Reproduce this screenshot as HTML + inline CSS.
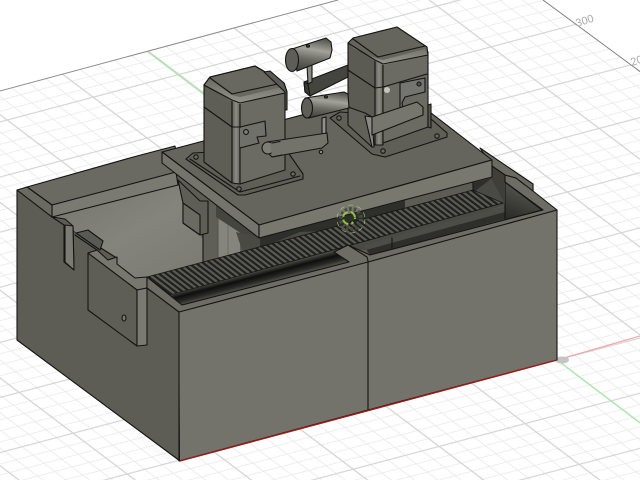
<!DOCTYPE html>
<html lang="en">
<head>
<meta charset="utf-8">
<title>CAD model</title>
<style>
html,body{margin:0;padding:0;background:#fff;width:640px;height:480px;overflow:hidden}
svg{display:block;filter:blur(.3px)}
text{font-family:"Liberation Sans",sans-serif;fill:#a8a8a8;font-size:11px}
.e{stroke:#141412;stroke-width:1.1;stroke-linejoin:round;stroke-linecap:round}
.n{fill:none}
</style>
</head>
<body>
<svg width="640" height="480" viewBox="0 0 640 480" xmlns="http://www.w3.org/2000/svg">
<defs>
<pattern id="g" patternUnits="userSpaceOnUse" width="5" height="5" patternTransform="matrix(17.2 -4.56 10.8 8.16 557 360)">
<rect x="0" y="1" width="5" height=".08" fill="#ebebeb"/>
<rect x="0" y="2" width="5" height=".08" fill="#ebebeb"/>
<rect x="0" y="3" width="5" height=".08" fill="#ebebeb"/>
<rect x="0" y="4" width="5" height=".08" fill="#ebebeb"/>
<rect x="1" y="0" width=".065" height="5" fill="#ebebeb"/>
<rect x="2" y="0" width=".065" height="5" fill="#ebebeb"/>
<rect x="3" y="0" width=".065" height="5" fill="#ebebeb"/>
<rect x="4" y="0" width=".065" height="5" fill="#ebebeb"/>
<rect x="0" y="-.05" width="5" height=".11" fill="#d4d4d4"/>
<rect x="-.04" y="0" width=".09" height="5" fill="#d4d4d4"/>
<rect x="0" y="4.95" width="5" height=".05" fill="#d4d4d4"/>
<rect x="4.96" y="0" width=".04" height="5" fill="#d4d4d4"/>
</pattern>
<pattern id="t" patternUnits="userSpaceOnUse" width="1" height="1" patternTransform="matrix(5.4 -1.43 7.6 5.8 147 277)">
<rect width="1" height="1" fill="#5a5a54"/>
<rect x="0" width=".5" height="1" fill="#20201c"/>
</pattern>
<linearGradient id="int" x1="0" y1="0" x2="1" y2="1"><stop offset="0" stop-color="#74746d"/><stop offset=".5" stop-color="#84847d"/><stop offset="1" stop-color="#797972"/></linearGradient>
<linearGradient id="sl" gradientUnits="userSpaceOnUse" x1="170" y1="295" x2="173.300" y2="307.600"><stop offset="0" stop-color="#3a3a36"/><stop offset=".3" stop-color="#0e0e0e"/><stop offset=".7" stop-color="#2a2a28"/><stop offset="1" stop-color="#55554f"/></linearGradient>
<linearGradient id="dk" x1=".7" y1="0" x2=".3" y2="1"><stop offset="0" stop-color="#5e5e57"/><stop offset="1" stop-color="#2c2c28"/></linearGradient>
<linearGradient id="cyl" x1=".6" y1="0" x2=".4" y2="1"><stop offset="0" stop-color="#55554f"/><stop offset=".35" stop-color="#a2a29a"/><stop offset=".65" stop-color="#6b6b64"/><stop offset="1" stop-color="#43433e"/></linearGradient>
<linearGradient id="bnd" x1=".5" y1="0" x2=".5" y2="1"><stop offset="0" stop-color="#6a6a63"/><stop offset="1" stop-color="#96958d"/></linearGradient>
<linearGradient id="fil" x1="0" y1="0" x2="1" y2="0"><stop offset="0" stop-color="#5c5c56"/><stop offset=".5" stop-color="#8c8c84"/><stop offset="1" stop-color="#62625b"/></linearGradient>
<clipPath id="gc"><polygon points="488,-41 900,265 900,800 -200,800 -200,145"/></clipPath>
<filter id="b4"><feGaussianBlur stdDeviation="4"/></filter>
</defs>

<rect width="640" height="480" fill="#fff"/>
<rect width="640" height="480" fill="url(#g)" clip-path="url(#gc)"/>
<line x1="-2" y1="91.500" x2="338" y2="0" stroke="#8d8d8d" stroke-width="1"/>
<line x1="543" y1="0" x2="642" y2="73" stroke="#7e7e7e" stroke-width="1"/>
<text transform="translate(577,27) rotate(-18)">300</text>
<text transform="translate(632,66) rotate(-18)">200</text>
<line x1="148" y1="52" x2="206" y2="96" stroke="#a8e8a8" stroke-width="1.2"/>
<line x1="557" y1="360" x2="640" y2="423" stroke="#a8e8a8" stroke-width="1.2"/>
<line x1="557" y1="360" x2="640" y2="336" stroke="#f4a6a6" stroke-width="1.2"/>
<ellipse cx="562" cy="360" rx="7" ry="3.500" fill="#c4c4c4"/>
<polygon points="92,402 170,458 176,464 130,430" fill="#bdbdbd" filter="url(#b4)" opacity=".7"/>

<!-- silhouette underlay -->
<polygon points="17,190 27,187 162,152 259,130 400,89 492,160 557,210 557,360 180,461 17,340" fill="#5d5d56"/>

<!-- left outer face -->
<polygon class="e" points="17,190 17,340 180,461 180,312 147,288 147,277 75,232 65,222 52,217" fill="#5d5d56"/>
<!-- right faces -->
<polygon fill="#73736c" points="179,312 368,261 368,410 180,461"/>
<polygon fill="#73736c" points="368,261 557,210 557,360 368,410"/>
<polyline class="e n" points="179,312 179,461 368,410 557,360 557,210"/>
<line class="e" x1="368" y1="261" x2="368" y2="410"/>
<line x1="180" y1="461" x2="557" y2="360" stroke="#a01a1a" stroke-width="1.4"/>

<!-- interior left -->
<polygon points="52,217 178,184 205,245 215,265 147,278 134,278 110,260 118,258 96,244 75,232 66,222" fill="url(#int)"/>
<!-- shelf -->
<polygon class="e" points="27,187 137,156 175,146 180,172 52,205" fill="#6a6a62"/>
<polygon class="e" points="52,205 176,172 178,185 52,217" fill="#7a7a72"/>
<polygon class="e" points="17,190 27,187 52,205 52,217" fill="#6a6a62"/>
<!-- notch strip -->
<polygon class="e" points="52,217 65,219 73,226 74,270 64,262 64,225" fill="#5d5d56"/>
<polygon class="e" points="65,225 73,226 74,270 65,262" fill="#7b7b73"/>
<!-- screws behind rim -->
<polygon class="e" points="76,233 88,230 103,241 100,250" fill="#5a5a54"/>
<!-- rim left -->
<polygon class="e" points="75,235 97,250 88,253 88,254 137,290 147,288 147,277 135,278 117,264 117,257 108,260 97,250" fill="#77776f"/>
<polygon class="e" points="88,253 137,290 137,346 88,310" fill="#5e5e57"/>
<polygon class="e" points="137,290 147,288 147,345 137,346" fill="#7a7a72"/>
<ellipse class="e" cx="124" cy="318" rx="2" ry="3" fill="#77776f"/>

<!-- columns under plate -->
<rect x="203" y="205" width="15" height="62" fill="#5f5f58"/>
<polygon points="218,205 240,222 240,258 218,264" fill="#85857d"/>
<line class="e" x1="203" y1="205" x2="203" y2="262"/>
<line x1="218" y1="215" x2="218" y2="262" stroke="#55554f"/>
<line x1="228" y1="222" x2="228" y2="256" stroke="#6d6d66"/>
<polygon class="e" points="178,180 200,201 208,201 208,233 200,235 183,223 183,203" fill="#5e5e57"/>
<polygon class="e" points="183,203 200,215 200,235 183,223" fill="#6a6a63"/>
<polygon fill="#45453f" points="216,205 262,238 260,250 239,232 216,217"/>

<!-- dark under plate region -->
<polygon points="236,232 262,238 492,175 505,182 505,205 370,250 346,250 250,274" fill="#4a4a44"/>
<polygon points="260,238 260,248 300,232 345,230 400,215 470,195 492,178" fill="#2e2e2a"/>
<polygon points="405,198 473,180 473,192 405,212" fill="#5d5d56"/>
<line class="e" x1="473" y1="178" x2="473" y2="192"/>
<!-- rack -->
<polygon points="147,277 473,190 503,203 170,295" fill="url(#t)" stroke="#141412" stroke-width=".8"/>
<!-- slots -->
<polygon points="170,295 347,248 352,262 182,305" fill="url(#sl)"/>
<polygon points="363,245 505,207 505,219 370,255" fill="#2e2e2b"/>
<polygon points="363,245 505,206 505,212 366,250" fill="#4d4d47"/>
<line class="e" x1="392" y1="238" x2="392" y2="248"/>
<!-- right corner dark -->
<polygon class="e" points="505,182 542,210 505,220" fill="url(#dk)"/>
<polygon points="492,160 505,175 516,177 533,190 505,182 505,204 492,180" fill="#3f3f3a"/>
<!-- rim top -->
<polygon class="e" points="147,288 147,277 182,305 349,262 334,252 348,245 370,255 543,210 505,182 505,175 516,178 525,185 533,184 533,191 557,210 368,262 179,312" fill="#6d6d66"/>
<polygon class="e" points="480,148 533,184 533,191 516,178 505,175 492,166" fill="#6a6a63"/>
<polyline class="e n" points="348,245 367,257 368,261"/>

<!-- plate -->
<polygon class="e" points="162,152 400,89 492,160 259,225" fill="#65655e"/>
<polygon class="e" points="162,152 259,225 259,238 162,163" fill="#74746d"/>
<polygon class="e" points="259,225 492,160 492,177 259,238" fill="#78786f"/>

<!-- gear -->
<g fill="none">
<circle cx="351" cy="219" r="10" stroke="#4a4a45" stroke-width="4" stroke-dasharray="2.500 2"/>
<circle cx="349" cy="218" r="6" stroke="#8fc63d" stroke-width="2" stroke-dasharray="7 3"/>
<circle cx="351" cy="219" r="14" stroke="#9fce7a" stroke-width=".6" stroke-dasharray="5 4"/>
</g>
<circle cx="355" cy="221" r="2" fill="#222"/>

<!-- base plate left -->
<path class="e" d="M186,159 L193,153 L285,148 L303,174 L303,179 L245,195 L238,195 Z" fill="#5f5f58"/>
<path class="e n" d="M190,159 L240,192 L300,176"/>
<circle class="e" cx="196" cy="157" r="2.200" fill="#6a6a62"/>
<circle class="e" cx="293" cy="174" r="2.200" fill="#6a6a62"/>
<circle class="e" cx="239" cy="189" r="2.200" fill="#6a6a62"/>

<!-- left block -->
<polygon class="e" points="204,85 204,162 232,183 232,100" fill="#5e5e57"/>
<polygon class="e" points="232,100 240,103 240,184 232,183" fill="url(#fil)"/>
<polygon class="e" points="240,103 285,92 285,170 240,184" fill="#6b6b63"/>
<polygon class="e" points="204,85 210,77 255,66 284,83 287,92 240,103 232,100" fill="#686860"/>
<polygon points="210,78 232,95 240,97 282,87 287,92 240,104 232,101 204,85" fill="url(#bnd)"/>
<polyline class="e n" points="204,85 210,77 255,66 284,83 287,92 285,93 240,103 232,100 204,85"/>
<polyline class="e n" points="210,78 232,94 282,83"/>
<polyline class="e n" points="204,107 232,127 240,127"/>
<polygon points="240,128 264,122 265,135 256,137 258,143 240,147" fill="#70706a"/>
<polyline class="e n" points="240,127 265,121 266,136 257,137 259,143 240,148"/>
<circle class="e" cx="246" cy="132" r="2.400" fill="#7f7f78"/>
<polygon class="e" points="264,72 270,71 284,83 287,92 287,110 285,110 285,92" fill="#5a5a54"/>

<!-- right base plate -->
<path class="e" d="M330,118 L340,112 L430,118 L447,133 L447,137 L385,157 L372,154 Z" fill="#5f5f58"/>
<circle class="e" cx="339" cy="118" r="2.200" fill="#6a6a62"/>
<circle class="e" cx="383" cy="151" r="2.200" fill="#6a6a62"/>
<circle class="e" cx="437" cy="136" r="2.200" fill="#6a6a62"/>

<!-- rear cylinder assembly -->
<polygon class="e" points="304,82 348,65 348,77 310,96 305,92" fill="#45453f"/>
<polygon class="e" points="304,82 308,84 310,96 305,92" fill="#3a3a35"/>
<polygon class="e" points="307,65 312,64 312,82 308,84" fill="#8b8b83"/>
<polygon class="e" points="292,49 326,38 331,42 332,50 330,58 297,71" fill="url(#cyl)"/>
<ellipse class="e" cx="292" cy="60" rx="6.500" ry="11.500" fill="#5e5e57"/>
<ellipse class="e" cx="308" cy="46" rx="1.500" ry="1.200" fill="#55554f"/>

<!-- right block -->
<polygon class="e" points="348,43 348,105 375,145 375,60" fill="#5b5b54"/>
<polygon class="e" points="375,60 383,64 383,145 375,145" fill="url(#fil)"/>
<polygon class="e" points="383,64 428,52 428,127 383,143" fill="#6b6b63"/>
<polygon points="353,38 397,27 427,47 428,55 383,65 375,60 348,43" fill="#65655e"/>
<polygon points="353,48 375,58 383,60 425,49 428,55 383,65 375,61 348,43" fill="url(#bnd)"/>
<polyline class="e n" points="348,43 353,38 397,27 427,47 428,55 383,64 375,60 348,43"/>
<polyline class="e n" points="353,39 378,57 425,46"/>
<polyline class="e n" points="348,70 375,88 383,87 427,74"/>
<polygon class="e" points="400,83 425,78 425,92 405,97 402,103 403,108 400,110" fill="#747470"/>
<circle class="e" cx="419" cy="84" r="2" fill="#55554f"/>
<circle cx="387" cy="90" r="3" fill="#c4c4bc"/>
<polygon class="e" points="428,105 431,104 431,128 428,127" fill="#5a5a54"/>

<!-- right lever -->
<polygon class="e" points="348,107 365,113 372,117 372,147 348,125" fill="#61615a"/>
<polygon class="e" points="365,116 372,117 374,147 372,147" fill="#8a8a82"/>
<polygon class="e" points="372,117 417,102 423,107 423,115 372,135" fill="#76766e"/>

<!-- front cylinder -->
<polygon class="e" points="322,118 326,117 326,133 322,135" fill="#92928a"/>
<polygon class="e" points="305,98 344,92 348,94 349,108 309,118" fill="url(#cyl)"/>
<ellipse class="e" cx="307" cy="108" rx="5.500" ry="10" fill="#5e5e57"/>
<ellipse class="e" cx="326" cy="97" rx="1.500" ry="1.100" fill="#55554f"/>

<!-- left handle -->
<polygon class="e" points="267,142 327,133 328,143 322,148 272,157 265,150" fill="#73736b"/>
<circle class="e" cx="268" cy="148" r="6" fill="#7e7e76"/>
<polygon points="270,143 280,142 282,153 272,156" fill="#73736b"/>
<line class="e" x1="272" y1="143" x2="280" y2="141.500"/>
<line class="e" x1="272" y1="157" x2="282" y2="155"/>
<circle class="e" cx="321" cy="152" r="1.800" fill="#8a8a82"/>
</svg>
</body>
</html>
